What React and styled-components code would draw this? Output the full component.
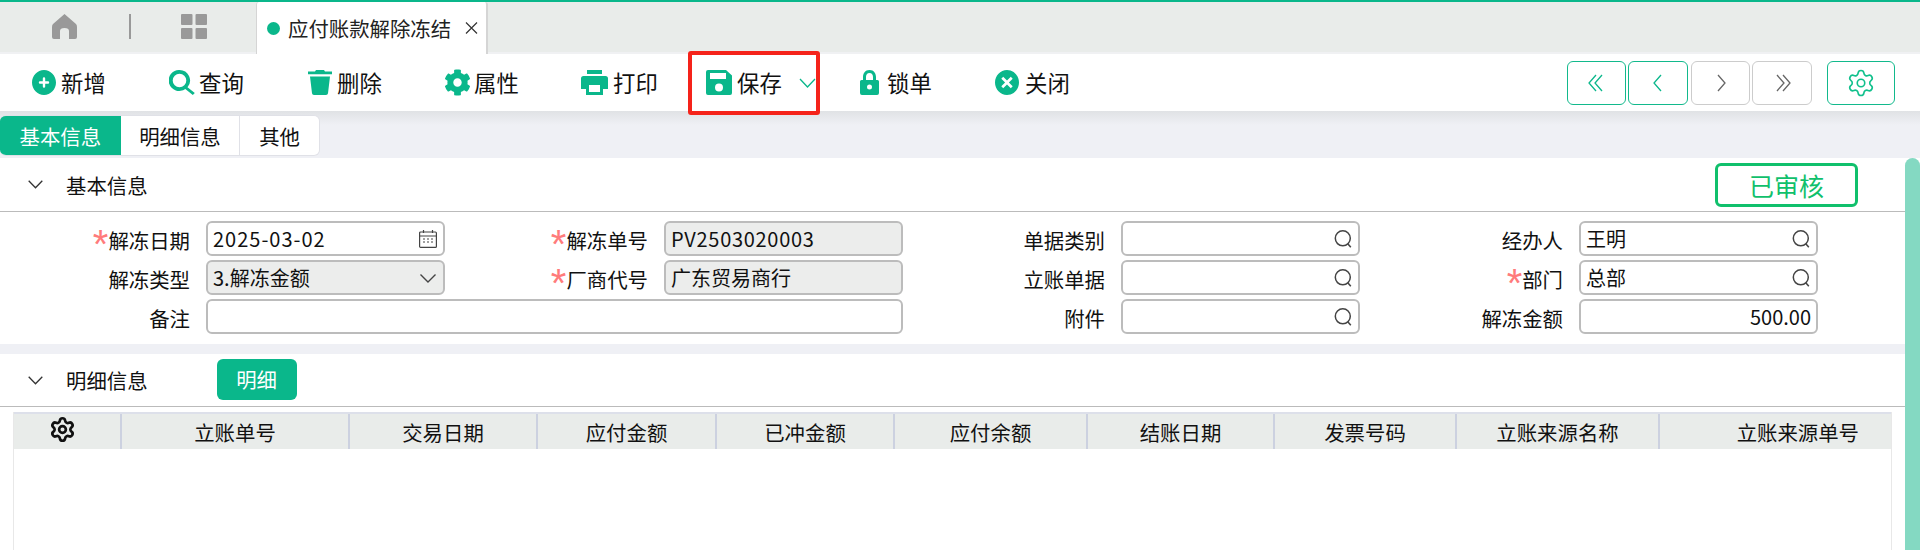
import React from "react";
import styled, { createGlobalStyle } from "styled-components";
import { Settings } from "lucide-react";
import { FaCog } from "react-icons/fa";

const GREEN = "#0ab78b";

const GlobalStyle = createGlobalStyle`
  html, body {
    margin: 0;
    padding: 0;
    background: #fff;
  }
  body {
    font-family: "Noto Sans CJK SC", "Liberation Sans", sans-serif;
    font-size: 20.4px;
    color: #111;
  }
  * {
    box-sizing: border-box;
  }
`;

const Page = styled.div`
  position: relative;
  width: 1920px;
  height: 550px;
  overflow: hidden;
  display: flex;
  flex-direction: column;
  border-top: 2px solid ${GREEN};
  background: #fff;
`;

const TabBar = styled.div`
  height: 52px;
  flex: none;
  display: flex;
  align-items: stretch;
  background: #e9ecea;
  border-bottom: 2px solid #f0f1f3;
`;

const TabIcons = styled.div`
  width: 256px;
  display: flex;
  align-items: center;
  padding: 0 0 2px 52px;
`;

const TabSep = styled.div`
  width: 2px;
  height: 25px;
  margin: 0 50px 0 52px;
  background: #999;
`;

const DocTab = styled.div`
  width: 232px;
  margin-bottom: -2px;
  display: flex;
  align-items: center;
  padding-left: 10px;
  background: #fff;
  border-left: 1px solid #d5d5d5;
  border-right: 2px solid #d5d5d5;
  border-radius: 3px 3px 0 0;
  color: #222;
`;

const Dot = styled.span`
  width: 13px;
  height: 13px;
  border-radius: 50%;
  background: ${GREEN};
  margin-right: 8px;
`;

const TabClose = styled.svg`
  width: 13px;
  height: 12px;
  margin-left: 14px;
`;

const Toolbar = styled.div`
  height: 57px;
  flex: none;
  display: flex;
  align-items: center;
  padding-left: 32px;
  background: #fff;
`;

const ToolButton = styled.div`
  position: relative;
  width: ${(p) => p.$w}px;
  display: flex;
  align-items: center;
  font-size: 22.4px;
  line-height: 25px;
  color: #111;
`;

const ToolIcon = styled.svg`
  width: ${(p) => p.$w}px;
  height: 25px;
  margin-right: ${(p) => p.$gap}px;
  fill: ${GREEN};
  flex: none;
`;

const GearIcon = styled(FaCog)`
  width: 27px;
  height: 27px;
  margin: 0 3px 0 -1px;
  color: ${GREEN};
  flex: none;
`;

const SaveCaret = styled.svg`
  width: 17px;
  height: 10px;
  margin-left: 17px;
`;

const RedBox = styled.div`
  position: absolute;
  left: -18px;
  top: -19px;
  width: 132px;
  height: 64px;
  border: 4px solid #f5231a;
  border-radius: 3px;
`;

const NavGroup = styled.div`
  margin-left: auto;
  display: flex;
  padding-right: 25px;
`;

const NavButton = styled.div`
  width: ${(p) => p.$w}px;
  height: 44px;
  margin-left: ${(p) => p.$ml || 0}px;
  display: flex;
  align-items: center;
  justify-content: center;
  background: #fff;
  border: 1px solid ${(p) => (p.$off ? "#cccccc" : "#12b98c")};
  border-radius: 6px;
`;

const TabStrip = styled.div`
  height: 47px;
  flex: none;
  padding-top: 4px;
  background: linear-gradient(#e0e2e5 0, #eff0f5 14px);
`;

const SubTabs = styled.div`
  width: 320px;
  height: 41px;
  display: flex;
  background: #fff;
  border: 1px solid #e0e1e7;
  border-left: none;
  border-radius: 6px;
  overflow: hidden;
`;

const SubTab = styled.div`
  width: ${(p) => p.$w}px;
  display: flex;
  align-items: center;
  justify-content: center;
  color: ${(p) => (p.$active ? "#fff" : "#111")};
  background: ${(p) => (p.$active ? GREEN : "transparent")};
  border-right: ${(p) => (p.$line ? "1px solid #e0e1e7" : "none")};
`;

const SectionHead = styled.div`
  height: ${(p) => p.$h}px;
  flex: none;
  display: flex;
  align-items: center;
  padding-left: 28px;
  border-bottom: 1px solid #bbbbbb;
`;

const Caret = styled.svg`
  width: 15px;
  height: 9px;
  margin-right: 23px;
`;

const Status = styled.div`
  width: 143px;
  height: 44px;
  margin-left: auto;
  margin-right: 62px;
  display: flex;
  align-items: center;
  justify-content: center;
  border: 3px solid #10c06c;
  border-radius: 6px;
  font-size: 25px;
  color: #10c06c;
`;

const DetailButton = styled.div`
  width: 80px;
  height: 41px;
  margin: 0 0 2px 69px;
  display: flex;
  align-items: center;
  justify-content: center;
  border-radius: 6px;
  background: ${GREEN};
  color: #fff;
`;

const Form = styled.div`
  display: grid;
  grid-template-columns: 206px 239px 219px 239px 218px 239px 219px 239px;
  grid-auto-rows: 35px;
  row-gap: 4px;
  padding: 9px 0 10px;
`;

const Label = styled.div`
  display: flex;
  align-items: center;
  justify-content: flex-end;
  padding: 3px 16px 0 0;
`;

const Star = styled.span`
  font-family: "Liberation Sans", sans-serif;
  font-size: 40px;
  line-height: 40px;
  height: 32px;
  color: #ff7b7b;
`;

const Field = styled.div`
  grid-column: ${(p) => (p.$span ? `span ${p.$span}` : "auto")};
  display: flex;
  align-items: center;
  justify-content: ${(p) => (p.$right ? "flex-end" : "space-between")};
  padding: 0 5px;
  background: ${(p) => (p.$gray ? "#ecedec" : "#fff")};
  border: 2px solid #bcbcbc;
  border-radius: 6px;
  font-size: 20px;
  letter-spacing: ${(p) => p.$ls || 0}px;
  white-space: nowrap;
`;

const FieldIcon = styled.svg`
  width: 18px;
  height: 18px;
  margin-left: auto;
  margin-right: 1px;
  flex: none;
`;

const Gap = styled.div`
  height: 10px;
  flex: none;
  background: #eff0f5;
`;

const Grid = styled.div`
  flex: 1;
  margin: 5px 28px 0 13px;
  border-left: 1px solid #e8e8e8;
  border-right: 1px solid #e8e8e8;
`;

const GridHead = styled.div`
  height: 37px;
  display: flex;
  background: #e9ecea;
  border-top: 2px solid #dde0ea;
`;

const GridCell = styled.div`
  width: ${(p) => p.$w}px;
  flex: none;
  display: flex;
  align-items: center;
  justify-content: ${(p) => (p.$end ? "flex-end" : "center")};
  padding-right: ${(p) => (p.$end ? 32 : 0)}px;
  border-right: ${(p) => (p.$end ? "none" : "2px solid #ccd1e0")};
`;

const HeadGear = styled(Settings)`
  width: 27px;
  height: 27px;
  margin: 0 10px 4px 0;
  color: #111;
`;

const Thumb = styled.div`
  position: absolute;
  right: 0;
  top: 156px;
  bottom: 0;
  width: 15px;
  background: #84d9c2;
  border-radius: 8px 8px 0 0;
`;

const Chevron = ({ d, color }) => (
  <svg width="20" height="22" viewBox="0 0 20 22" fill="none" stroke={color} strokeWidth="1.3">
    {d.map((p) => (
      <polyline key={p} points={p} />
    ))}
  </svg>
);

const HomeIcon = () => (
  <svg width="25" height="25" viewBox="0 0 25 25" fill="#999">
    <path d="M12.5 0 L24 10 Q25 11 25 13 V23 Q25 25 23 25 H17 V17 Q17 14 12.5 14 Q8 14 8 17 V25 H2 Q0 25 0 23 V13 Q0 11 1 10 Z" />
  </svg>
);

const AppsIcon = () => (
  <svg width="26" height="25" viewBox="0 0 26 25" fill="#999">
    <rect x="0" y="0" width="11.5" height="11" rx="1" />
    <rect x="14.5" y="0" width="11.5" height="11" rx="1" />
    <rect x="0" y="14" width="11.5" height="11" rx="1" />
    <rect x="14.5" y="14" width="11.5" height="11" rx="1" />
  </svg>
);

const tools = [
  {
    label: "新增",
    w: 137,
    iw: 24,
    gap: 5,
    vb: "0 0 24 25",
    icon: (
      <path
        fillRule="evenodd"
        d="M12 0C18.600 0 24 5.600 24 12.500S18.600 25 12 25 0 19.400 0 12.500 5.400 0 12 0zM10.800 8.500v2.800H8q-1.200 0-1.200 1.200T8 13.700h2.800v2.800q0 1.200 1.200 1.200t1.200-1.200v-2.800H16q1.200 0 1.200-1.200T16 11.300h-2.800V8.500q0-1.200-1.200-1.200t-1.200 1.200z"
      />
    ),
  },
  {
    label: "查询",
    w: 139,
    iw: 26,
    gap: 4,
    vb: "0 0 26 25",
    icon: (
      <path
        fillRule="evenodd"
        d="M10.500 0a10.500 10.500 0 0 1 8 17.300l7.300 5.700-2 2-7.500-6a10.500 10.500 0 1 1-5.800-19zm0 3.700a6.800 6.800 0 1 0 0 13.600 6.800 6.800 0 0 0 0-13.600z"
      />
    ),
  },
  {
    label: "删除",
    w: 137,
    iw: 24,
    gap: 5,
    vb: "0 0 24 25",
    icon: <path d="M8 0h8l1 1.500h7v2.700H0V1.500h7zM2 6.500h20l-2 16.700Q19.800 25 18 25H6q-1.800 0-2-1.800z" />,
  },
  {
    label: "属性",
    w: 136,
    gear: true,
  },
  {
    label: "打印",
    w: 125,
    iw: 27,
    gap: 5,
    vb: "0 0 27 25",
    icon: (
      <path
        fillRule="evenodd"
        d="M6 0h15v4H6zM2.500 6h22Q27 6 27 8.500V19h-5v6H5v-6H0V8.500Q0 6 2.500 6zM8 15v7h11v-7z"
      />
    ),
  },
  {
    label: "保存",
    w: 154,
    iw: 26,
    gap: 5,
    vb: "0 0 26 25",
    save: true,
    icon: (
      <path
        fillRule="evenodd"
        d="M2 0h18l6 5.500V23q0 2-2 2H2q-2 0-2-2V2q0-2 2-2zM4 3v6h16V3zm9 10.500a4 4 0 1 0 0 8 4 4 0 0 0 0-8z"
      />
    ),
  },
  {
    label: "锁单",
    w: 135,
    iw: 19,
    gap: 8,
    vb: "0 0 19 25",
    icon: (
      <path
        fillRule="evenodd"
        d="M9.500 0C14 0 16 3.500 16 7v3h1.500q1.500 0 1.500 1.500V23q0 2-2 2H2q-2 0-2-2V11.500Q0 10 1.500 10H3V7C3 3.500 5 0 9.500 0zm0 3C7 3 6 5 6 7v3h7V7c0-2-1-4-3.500-4zm0 11.500a2.500 2.500 0 1 0 0 5 2.500 2.500 0 0 0 0-5z"
      />
    ),
  },
  {
    label: "关闭",
    w: 100,
    iw: 24,
    gap: 6,
    vb: "0 0 24 25",
    icon: (
      <path
        fillRule="evenodd"
        d="M12 0c6.600 0 12 5.600 12 12.500S18.600 25 12 25 0 19.400 0 12.500 5.400 0 12 0zM8.200 6.800 6.300 8.700l3.800 3.800-3.800 3.800 1.900 1.900 3.800-3.800 3.800 3.800 1.900-1.900-3.800-3.800 3.800-3.800-1.900-1.900-3.800 3.800z"
      />
    ),
  },
];

const SearchGlyph = () => (
  <FieldIcon viewBox="0 0 18 18" fill="none" stroke="#444" strokeWidth="1.500">
    <circle cx="8.800" cy="8.300" r="7.500" />
    <path d="M14 14l2.800 3.300" />
  </FieldIcon>
);

const CalendarGlyph = () => (
  <FieldIcon viewBox="0 0 18 18" fill="none" stroke="#444" strokeWidth="1.200">
    <rect x="0.600" y="2" width="16.800" height="15.400" rx="1" />
    <path d="M1 6h16M4.500 0v3M13.500 0v3" />
    <path d="M4 9h2M8 9h2M12 9h2M4 12h2M8 12h2M12 12h2" />
  </FieldIcon>
);

const SelectGlyph = () => (
  <FieldIcon viewBox="0 0 18 18" fill="none" stroke="#444" strokeWidth="1.400">
    <path d="M1.500 5.500L9 13l7.500-7.500" />
  </FieldIcon>
);

const columns = [
  { w: 108, gear: true },
  { w: 228, t: "立账单号" },
  { w: 188, t: "交易日期" },
  { w: 179, t: "应付金额" },
  { w: 178, t: "已冲金额" },
  { w: 193, t: "应付余额" },
  { w: 187, t: "结账日期" },
  { w: 182, t: "发票号码" },
  { w: 203, t: "立账来源名称" },
  { w: 231, t: "立账来源单号", end: true },
];

const App = () => {
  return (
    <Page>
      <GlobalStyle />
      <TabBar>
        <TabIcons>
          <HomeIcon />
          <TabSep />
          <AppsIcon />
        </TabIcons>
        <DocTab>
          <Dot />
          应付账款解除冻结
          <TabClose viewBox="0 0 13 12" fill="none" stroke="#333" strokeWidth="1.200">
            <path d="M1 .5l11 11M12 .5l-11 11" />
          </TabClose>
        </DocTab>
      </TabBar>

      <Toolbar>
        {tools.map((t) => (
          <ToolButton key={t.label} $w={t.w}>
            {t.gear ? (
              <GearIcon />
            ) : (
              <ToolIcon $w={t.iw} $gap={t.gap} viewBox={t.vb}>
                {t.icon}
              </ToolIcon>
            )}
            {t.label}
            {t.save && (
              <>
                <SaveCaret viewBox="0 0 17 10" fill="none" stroke={GREEN} strokeWidth="1.300">
                  <path d="M1 1l7.500 8L16 1" />
                </SaveCaret>
                <RedBox />
              </>
            )}
          </ToolButton>
        ))}
        <NavGroup>
          <NavButton $w={59}>
            <Chevron color={GREEN} d={["9,3 2,11 9,19", "15,3 8,11 15,19"]} />
          </NavButton>
          <NavButton $w={60} $ml={2}>
            <Chevron color={GREEN} d={["13,3 6,11 13,19"]} />
          </NavButton>
          <NavButton $w={59} $ml={3} $off>
            <Chevron color="#666" d={["7,3 14,11 7,19"]} />
          </NavButton>
          <NavButton $w={60} $ml={2} $off>
            <Chevron color="#666" d={["5,3 12,11 5,19", "11,3 18,11 11,19"]} />
          </NavButton>
          <NavButton $w={68} $ml={15}>
            <Settings size={30} color="#10c08c" strokeWidth={1.3} />
          </NavButton>
        </NavGroup>
      </Toolbar>

      <TabStrip>
        <SubTabs>
          <SubTab $w={121} $active>
            基本信息
          </SubTab>
          <SubTab $w={120} $line>
            明细信息
          </SubTab>
          <SubTab $w={79}>其他</SubTab>
        </SubTabs>
      </TabStrip>

      <SectionHead $h={54}>
        <Caret viewBox="0 0 15 9" fill="none" stroke="#333" strokeWidth="1.300">
          <path d="M.7.7l6.800 7 6.800-7" />
        </Caret>
        基本信息
        <Status>已审核</Status>
      </SectionHead>

      <Form>
        <Label>
          <Star>*</Star>解冻日期
        </Label>
        <Field $ls={1}>
          2025-03-02
          <CalendarGlyph />
        </Field>
        <Label>
          <Star>*</Star>解冻单号
        </Label>
        <Field $gray $ls={0.7}>
          PV2503020003
        </Field>
        <Label>单据类别</Label>
        <Field>
          <SearchGlyph />
        </Field>
        <Label>经办人</Label>
        <Field>
          王明
          <SearchGlyph />
        </Field>

        <Label>解冻类型</Label>
        <Field $gray>
          3.解冻金额
          <SelectGlyph />
        </Field>
        <Label>
          <Star>*</Star>厂商代号
        </Label>
        <Field $gray>广东贸易商行</Field>
        <Label>立账单据</Label>
        <Field>
          <SearchGlyph />
        </Field>
        <Label>
          <Star>*</Star>部门
        </Label>
        <Field>
          总部
          <SearchGlyph />
        </Field>

        <Label>备注</Label>
        <Field $span={3} />
        <Label>附件</Label>
        <Field>
          <SearchGlyph />
        </Field>
        <Label>解冻金额</Label>
        <Field $right>500.00</Field>
      </Form>

      <Gap />

      <SectionHead $h={53}>
        <Caret viewBox="0 0 15 9" fill="none" stroke="#333" strokeWidth="1.300">
          <path d="M.7.7l6.800 7 6.800-7" />
        </Caret>
        明细信息
        <DetailButton>明细</DetailButton>
      </SectionHead>

      <Grid>
        <GridHead>
          {columns.map((c, i) => (
            <GridCell key={i} $w={c.w} $end={c.end}>
              {c.gear ? <HeadGear strokeWidth={2.4} /> : c.t}
            </GridCell>
          ))}
        </GridHead>
      </Grid>

      <Thumb />
    </Page>
  );
};

export default App;
